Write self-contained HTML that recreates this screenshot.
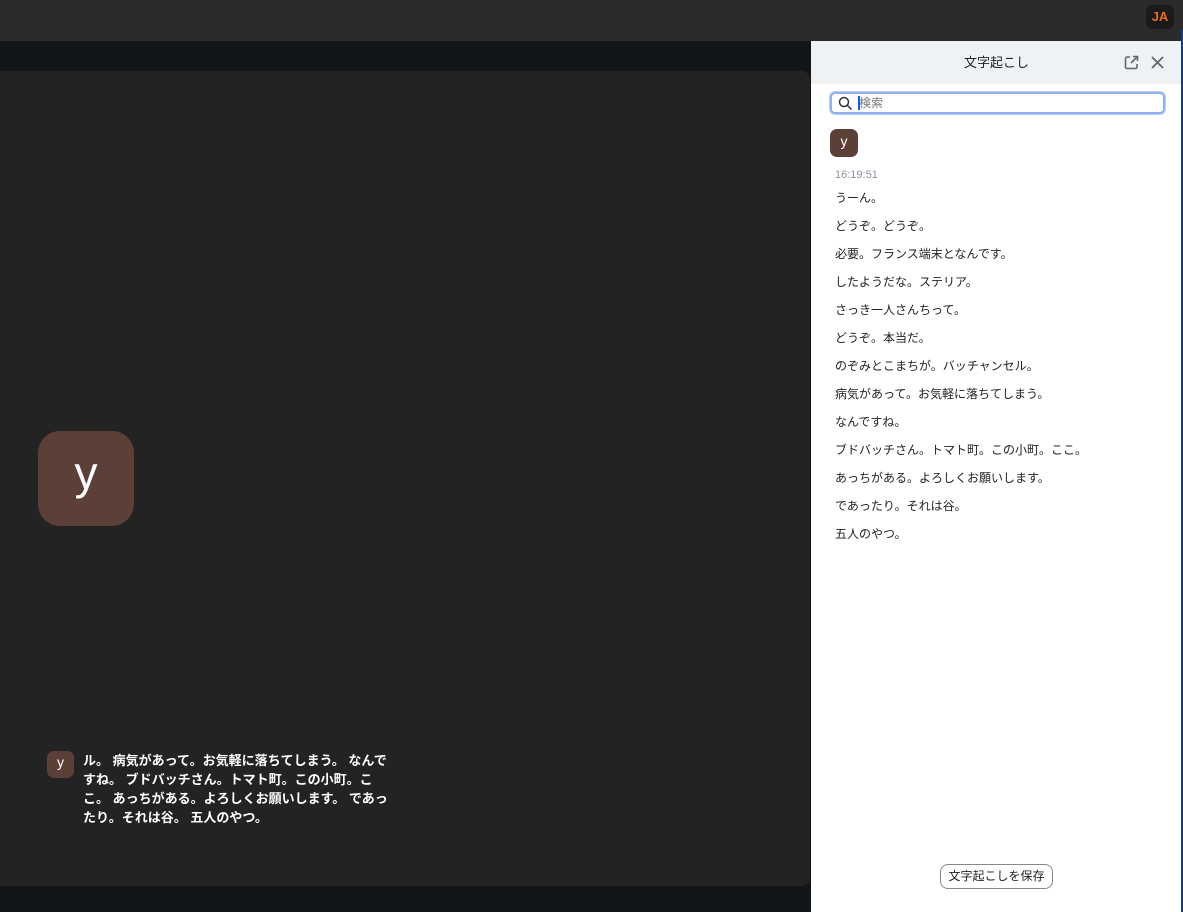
<!DOCTYPE html>
<html><head><meta charset="utf-8"><style>
*{margin:0;padding:0;box-sizing:border-box}
body{width:1183px;height:912px;background:#131619;position:relative;overflow:hidden;font-family:"Liberation Sans","Noto Sans CJK JP",sans-serif}
.top{position:absolute;left:0;top:0;width:1183px;height:41px;background:#2b2b2b}
.ja{position:absolute;left:1146px;top:5px;width:28px;height:24px;background:#1b1b1b;border-radius:6px;color:#f26a1b;font-weight:bold;font-size:13px;text-align:center;line-height:24px}
.main{position:absolute;left:0;top:71px;width:810px;height:815px;background:#232323;border-radius:0 8px 8px 0}
.big{position:absolute;left:38px;top:431px;width:96px;height:95px;background:#5c3f36;border-radius:22px;color:#fff;font-size:46px;text-align:center;line-height:84px}
.cap{position:absolute;left:47px;top:751px}
.sm{position:absolute;left:0;top:0;width:27px;height:27px;background:#5c3f36;border-radius:7px;color:#fff;font-size:14px;text-align:center;line-height:22px}
.ct{position:absolute;left:36px;top:0;width:308px;color:#fff;font-weight:bold;font-size:13px;line-height:19px}
.panel{position:absolute;left:811px;top:41px;width:371px;height:871px;background:#fff}
.edge{position:absolute;left:1181px;top:30px;width:2px;height:882px;background:#1a3a7a}
.hd{height:43px;background:#eff2f5;text-align:center;font-size:13px;line-height:43px;color:#222}
.search{position:absolute;left:19px;top:51px;width:335px;height:22px;border:2px solid #8fb1f4;box-shadow:0 0 0 1px #b8cdf7;border-radius:5px;font-size:12px;color:#777;line-height:18px;padding-left:27px}
.search .c{position:absolute;left:26px;top:2px;width:2px;height:14px;background:#0a5cf0}
.av{position:absolute;left:19px;top:88px;width:28px;height:28px;background:#5c3f36;border-radius:7px;color:#fff;font-size:14px;text-align:center;line-height:24px}
.time{position:absolute;left:24px;top:128px;font-size:11px;color:#8a94a3}
.lines{position:absolute;left:24px;top:145px;font-size:12px;color:#222}
.lines div{height:28px;line-height:24px}
.btn{position:absolute;left:129px;top:823px;width:113px;height:25px;border:1px solid #888;border-radius:8px;font-size:12px;text-align:center;line-height:23px;color:#222}
</style></head><body>
<div class="top"><div class="ja">JA</div></div>
<div class="main"></div>
<div class="big">y</div>
<div class="cap"><div class="sm">y</div><div class="ct">ル。 病気があって。お気軽に落ちてしまう。 なんで<br>すね。 ブドバッチさん。トマト町。この小町。こ<br>こ。 あっちがある。よろしくお願いします。 であっ<br>たり。それは谷。 五人のやつ。</div></div>
<div class="panel">
<div class="hd">文字起こし</div>
<svg style="position:absolute;left:313px;top:14px" width="15" height="15" viewBox="0 0 15 15" fill="none" stroke="#666" stroke-width="1.6"><path d="M6 2H3a1.5 1.5 0 0 0-1.5 1.5v8.5A1.5 1.5 0 0 0 3 13.5h8.5a1.5 1.5 0 0 0 1.5-1.5V9"/><path d="M9 1.5h4.5V6M13.5 1.5L7 8"/></svg>
<svg style="position:absolute;left:340px;top:15px" width="13" height="13" viewBox="0 0 13 13" stroke="#666" stroke-width="1.8"><path d="M1 1L12 12M12 1L1 12"/></svg>
<div class="search"><svg style="position:absolute;left:6px;top:2px" width="15" height="15" viewBox="0 0 15 15" fill="none" stroke="#333" stroke-width="1.5"><circle cx="6" cy="6" r="4.5"/><path d="M9.5 9.5L13.5 13.5"/></svg><span class="c"></span>検索</div>
<div class="av">y</div>
<div class="time">16:19:51</div>
<div class="lines">
<div>うーん。</div><div>どうぞ。どうぞ。</div><div>必要。フランス端末となんです。</div><div>したようだな。ステリア。</div><div>さっき一人さんちって。</div><div>どうぞ。本当だ。</div><div>のぞみとこまちが。バッチャンセル。</div><div>病気があって。お気軽に落ちてしまう。</div><div>なんですね。</div><div>ブドバッチさん。トマト町。この小町。ここ。</div><div>あっちがある。よろしくお願いします。</div><div>であったり。それは谷。</div><div>五人のやつ。</div>
</div>
<div class="btn">文字起こしを保存</div>
</div>
<div class="edge"></div>
</body></html>
